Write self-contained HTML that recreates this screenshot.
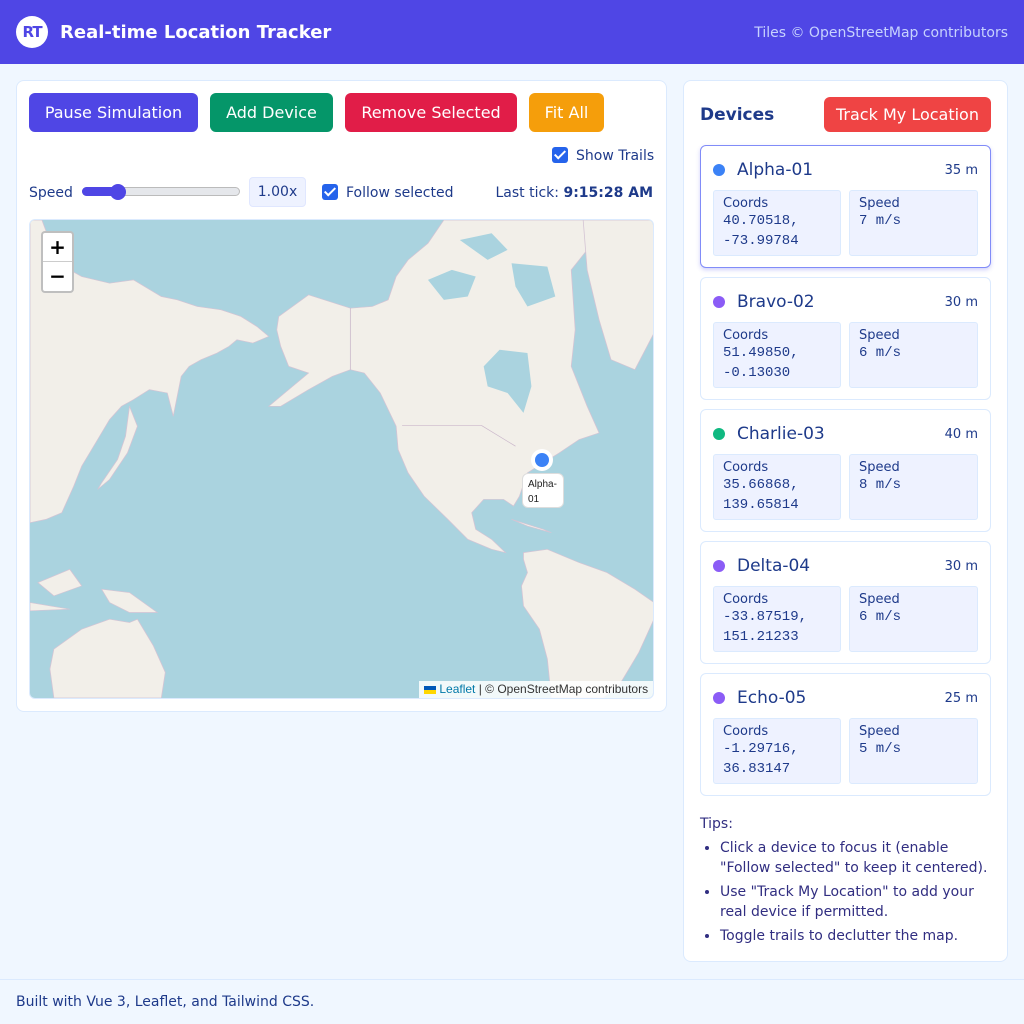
<!DOCTYPE html><html><head><meta charset="utf-8"><style>
*{box-sizing:border-box;margin:0;padding:0}
body{width:1024px;height:1024px;background:#f0f7ff;font-family:"DejaVu Sans","Liberation Sans",sans-serif;color:#1e3a8a;position:relative;overflow:hidden}
.a{position:absolute}
.hdr{left:0;top:0;width:1024px;height:64px;background:#4f46e5}
.btn{position:absolute;top:93px;height:39px;border-radius:6px;color:#fff;font-size:16px;line-height:39px;text-align:center}
.cb{position:absolute;width:16px;height:16px;background:#2563eb;border-radius:3px}
.cb:after{content:"";position:absolute;left:5px;top:1px;width:4px;height:9px;border:solid #fff;border-width:0 2px 2px 0;transform:rotate(45deg)}
.card{position:absolute;left:700px;width:291px;height:123px;background:#fff;border:1px solid #dbeafe;border-radius:6px}
.dot{position:absolute;left:12px;top:18px;width:12px;height:12px;border-radius:50%}
.nm{position:absolute;left:36px;top:14px;font-size:17px}
.ds{position:absolute;right:12px;top:17px;font-size:13px}
.bx{position:absolute;top:44px;height:66px;background:#eef2ff;border:1px solid #dbeafe;border-radius:3px;padding:5px 9px;font-size:13px;line-height:16px}
.bx .m{font-family:"Liberation Mono",monospace;font-size:14px;line-height:20px;margin-top:-1px}
li{margin-left:20px}
</style></head><body>
<div class="a hdr"></div>
<div class="a" style="left:16px;top:16px;width:32px;height:32px;border-radius:50%;background:#fff;color:#4f46e5;font-weight:bold;font-size:15px;line-height:32px;text-align:center;letter-spacing:-1px">RT</div>
<div class="a" style="left:60px;top:22px;color:#fff;font-weight:bold;font-size:18px">Real-time Location Tracker</div>
<div class="a" style="right:16px;top:25px;color:#c7d2fe;font-size:14px">Tiles © OpenStreetMap contributors</div>

<div class="a" style="left:16px;top:80px;width:651px;height:632px;background:#fff;border:1px solid #dbeafe;border-radius:8px"></div>
<div class="btn" style="left:29px;width:169px;background:#4f46e5">Pause Simulation</div>
<div class="btn" style="left:210px;width:123px;background:#059669">Add Device</div>
<div class="btn" style="left:345px;width:172px;background:#e11d48">Remove Selected</div>
<div class="btn" style="left:529px;width:75px;background:#f59e0b">Fit All</div>
<div class="cb" style="left:552px;top:147px"></div>
<div class="a" style="left:576px;top:148px;font-size:14px">Show Trails</div>
<div class="a" style="left:29px;top:185px;font-size:14px">Speed</div>
<div class="a" style="left:82px;top:187px;width:158px;height:9px;border-radius:5px;background:#e5e7eb;border:1px solid #bbb"></div>
<div class="a" style="left:82px;top:187px;width:36px;height:9px;border-radius:5px;background:#4f46e5"></div>
<div class="a" style="left:110px;top:184px;width:16px;height:16px;border-radius:50%;background:#4f46e5"></div>
<div class="a" style="left:249px;top:177px;width:57px;height:30px;background:#eef2ff;border:1px solid #e0e7ff;border-radius:4px;font-size:14px;line-height:29px;text-align:center">1.00x</div>
<div class="cb" style="left:322px;top:184px"></div>
<div class="a" style="left:346px;top:185px;font-size:14px">Follow selected</div>
<div class="a" style="right:371px;top:185px;font-size:14px">Last tick: <b>9:15:28 AM</b></div>

<div class="a" style="left:29px;top:219px;width:625px;height:480px;border:1px solid #dbeafe;border-radius:6px;overflow:hidden;background:#aad3df">
<svg width="624" height="478" viewBox="0 0 1568 1437" preserveAspectRatio="none" style="position:absolute;left:0;top:0">
<g fill="#f2efe9" stroke="#d4c4d4" stroke-width="2">
<polygon points="0,0 30,0 70,130 130,170 200,190 260,180 330,230 370,240 420,260 480,270 530,290 570,320 600,350 560,370 520,360 500,380 470,400 430,420 400,440 380,470 360,590 345,520 300,510 260,540 230,560 200,600 180,640 150,700 130,740 110,800 80,880 40,900 0,910"/>
<polygon points="250,560 270,620 245,700 200,780 170,810 180,790 220,720 240,650"/>
<polygon points="20,1090 100,1050 130,1100 60,1130"/>
<polygon points="180,1110 250,1120 320,1180 250,1180 200,1150"/>
<polygon points="0,1150 100,1170 0,1175"/>
<polygon points="60,1290 130,1230 200,1200 250,1210 270,1200 310,1280 340,1360 330,1437 60,1437 50,1350"/>
<polygon points="625,290 700,225 805,265 860,260 900,240 920,170 950,120 1000,70 1040,0 1400,0 1420,60 1360,150 1370,330 1360,440 1400,560 1430,640 1380,660 1330,700 1290,730 1250,760 1230,830 1215,860 1190,840 1140,840 1110,880 1120,930 1160,960 1195,1000 1160,990 1100,960 1050,900 990,830 950,760 925,690 920,620 880,520 840,460 805,450 760,470 700,510 630,560 600,560 660,500 700,460 650,440 630,380 620,330"/>
<polygon points="1390,0 1568,0 1568,340 1520,450 1460,420 1430,300 1400,150"/>
<polygon points="1210,900 1290,930 1310,940 1250,920"/>
<polygon points="1240,1000 1300,990 1380,1030 1450,1060 1520,1110 1568,1150 1568,1200 1530,1300 1480,1400 1440,1437 1310,1437 1300,1320 1280,1230 1240,1160 1235,1100 1250,1060 1240,1020"/>
</g>
<g fill="#aad3df">
<polygon points="1140,440 1180,390 1250,400 1260,500 1240,580 1200,520 1150,500"/>
<polygon points="1000,180 1060,150 1120,170 1100,230 1040,240"/>
<polygon points="1080,60 1160,40 1200,90 1150,120"/>
<polygon points="1210,130 1300,140 1320,230 1250,260 1220,200"/>
</g>
<polyline fill="none" stroke="#cbb8cb" stroke-width="2" points="805,265 805,450"/>
<polyline fill="none" stroke="#cbb8cb" stroke-width="2" points="935,618 1135,618 1220,680"/>
</svg>
<div class="a" style="left:11px;top:11px;width:33px;height:62px;background:#fff;border:2px solid rgba(0,0,0,.25);border-radius:4px;font-size:20px;font-weight:bold;text-align:center;color:#000">
<div style="height:29px;line-height:28px;border-bottom:1px solid #ccc">+</div><div style="line-height:29px">−</div></div>
<div class="a" style="left:501px;top:229px;width:22px;height:22px;border-radius:50%;background:#fff"></div>
<div class="a" style="left:505px;top:233px;width:14px;height:14px;border-radius:50%;background:#3b82f6"></div>
<div class="a" style="left:492px;top:253px;width:42px;height:35px;background:#fff;border-radius:6px;border:1px solid #ddd;font-family:'Liberation Sans',sans-serif;font-size:10px;color:#222;padding:3px 5px;line-height:15px">Alpha-<br>01</div>
<div class="a" style="left:389px;top:461px;width:235px;height:17px;background:rgba(255,255,255,.85);font-family:'Liberation Sans',sans-serif;font-size:12px;color:#333;line-height:17px;padding-left:5px"><span style="display:inline-block;width:12px;height:8px;background:linear-gradient(#0057b7 50%,#ffd700 50%);vertical-align:-1px"></span> <span style="color:#0078a8">Leaflet</span> | © OpenStreetMap contributors</div>
</div>

<div class="a" style="left:683px;top:80px;width:325px;height:882px;background:#fff;border:1px solid #dbeafe;border-radius:8px"></div>
<div class="a" style="left:700px;top:105px;font-size:17px;font-weight:bold">Devices</div>
<div class="a" style="left:824px;top:97px;width:167px;height:35px;background:#ef4444;border-radius:6px;color:#fff;font-size:16px;line-height:35px;text-align:center">Track My Location</div>

<div class="card" style="top:145px;border-color:#818cf8;box-shadow:0 2px 4px rgba(99,102,241,.3)"><div class="dot" style="background:#3b82f6"></div><div class="nm">Alpha-01</div><div class="ds">35 m</div><div class="bx" style="left:12px;width:128px">Coords<div class="m">40.70518,<br>-73.99784</div></div><div class="bx" style="left:148px;width:129px">Speed<div class="m">7 m/s</div></div></div>
<div class="card" style="top:277px"><div class="dot" style="background:#8b5cf6"></div><div class="nm">Bravo-02</div><div class="ds">30 m</div><div class="bx" style="left:12px;width:128px">Coords<div class="m">51.49850,<br>-0.13030</div></div><div class="bx" style="left:148px;width:129px">Speed<div class="m">6 m/s</div></div></div>
<div class="card" style="top:409px"><div class="dot" style="background:#10b981"></div><div class="nm">Charlie-03</div><div class="ds">40 m</div><div class="bx" style="left:12px;width:128px">Coords<div class="m">35.66868,<br>139.65814</div></div><div class="bx" style="left:148px;width:129px">Speed<div class="m">8 m/s</div></div></div>
<div class="card" style="top:541px"><div class="dot" style="background:#8b5cf6"></div><div class="nm">Delta-04</div><div class="ds">30 m</div><div class="bx" style="left:12px;width:128px">Coords<div class="m">-33.87519,<br>151.21233</div></div><div class="bx" style="left:148px;width:129px">Speed<div class="m">6 m/s</div></div></div>
<div class="card" style="top:673px"><div class="dot" style="background:#8b5cf6"></div><div class="nm">Echo-05</div><div class="ds">25 m</div><div class="bx" style="left:12px;width:128px">Coords<div class="m">-1.29716,<br>36.83147</div></div><div class="bx" style="left:148px;width:129px">Speed<div class="m">5 m/s</div></div></div>

<div class="a" style="left:700px;top:814px;width:300px;font-size:14px;line-height:20px;color:#312e81">Tips:
<ul style="margin-top:4px"><li style="margin-bottom:4px">Click a device to focus it (enable "Follow selected" to keep it centered).</li><li style="margin-bottom:4px">Use "Track My Location" to add your real device if permitted.</li><li>Toggle trails to declutter the map.</li></ul></div>

<div class="a" style="left:0;top:979px;width:1024px;height:1px;background:#dbeafe"></div>
<div class="a" style="left:16px;top:994px;font-size:14px">Built with Vue 3, Leaflet, and Tailwind CSS.</div>
</body></html>
